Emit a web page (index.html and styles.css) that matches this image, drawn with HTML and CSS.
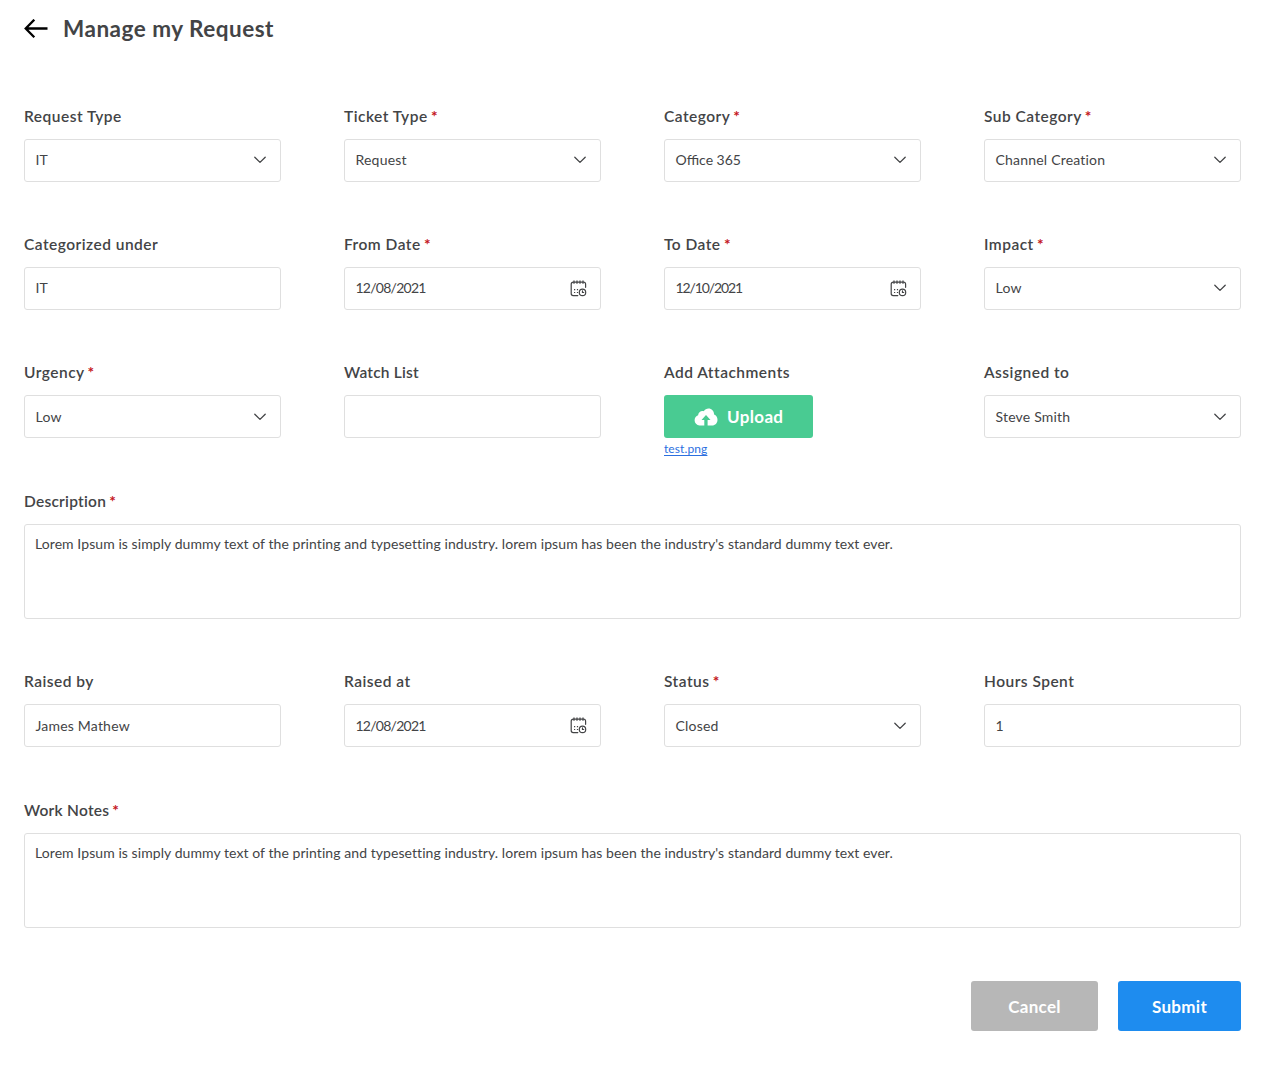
FILE: index.html
```
<!DOCTYPE html>
<html lang="en">
<head>
<meta charset="utf-8">
<title>Manage my Request</title>
<link rel="stylesheet" href="styles.css">
</head>
<body>
<svg class="defs" aria-hidden="true">
  <symbol id="chevron" viewBox="0 0 14 8"><path d="M1.800 1.300 7 6.400l5.200-5.100" fill="none" stroke="currentColor" stroke-width="1.300" stroke-linecap="round" stroke-linejoin="round"/></symbol>
  <symbol id="calendar" viewBox="0 0 17 17">
    <g fill="none" stroke="currentColor" stroke-width="1.200" stroke-linecap="round">
      <path d="M15.600 7.300V4.200a2 2 0 0 0-2-2H3.200a2 2 0 0 0-2 2v9.400a2 2 0 0 0 2 2H7.800"/>
      <path d="M4 .9v2.400M7 .9v2.400M10 .9v2.400M13 .9v2.400"/>
      <circle cx="12.500" cy="12.400" r="3.200"/>
      <path d="M12.500 10.900v1.600h1.200"/>
    </g>
    <path d="M4 9h1.200v1.200H4zM6.900 9h1.200v1.200H6.900zM4 11.900h1.200v1.200H4zM6.900 11.900h1.200v1.200H6.900z" fill="currentColor"/>
  </symbol>
</svg>
<main class="page">
  <header class="header">
    <svg class="back" viewBox="0 0 24 20"><path d="M10.300.7 1.700 9.500l8.600 8.800M1.700 9.500H23.500" fill="none" stroke="#000" stroke-width="2.300"/></svg>
    <h1 class="title">Manage my Request</h1>
  </header>
  <form class="form">
    <div class="field"><div class="label">Request Type</div><div class="box"><span>IT</span><svg class="chevron"><use href="#chevron"/></svg></div></div>
    <div class="field"><div class="label">Ticket Type <b class="req">*</b></div><div class="box"><span>Request</span><svg class="chevron"><use href="#chevron"/></svg></div></div>
    <div class="field"><div class="label">Category <b class="req">*</b></div><div class="box"><span class="snug">Office 365</span><svg class="chevron"><use href="#chevron"/></svg></div></div>
    <div class="field"><div class="label">Sub Category <b class="req">*</b></div><div class="box"><span>Channel Creation</span><svg class="chevron"><use href="#chevron"/></svg></div></div>

    <div class="field"><div class="label">Categorized under</div><div class="box"><span>IT</span></div></div>
    <div class="field"><div class="label">From Date <b class="req">*</b></div><div class="box"><span class="date">12/08/2021</span><svg class="calendar"><use href="#calendar"/></svg></div></div>
    <div class="field"><div class="label">To Date <b class="req">*</b></div><div class="box"><span class="date narrow">12/10/2021</span><svg class="calendar"><use href="#calendar"/></svg></div></div>
    <div class="field"><div class="label">Impact <b class="req">*</b></div><div class="box"><span>Low</span><svg class="chevron"><use href="#chevron"/></svg></div></div>

    <div class="field"><div class="label">Urgency <b class="req">*</b></div><div class="box"><span>Low</span><svg class="chevron"><use href="#chevron"/></svg></div></div>
    <div class="field"><div class="label snug">Watch List</div><div class="box"></div></div>
    <div class="field upload-field"><div class="label">Add Attachments</div>
      <button class="upload" type="button"><svg class="cloud" viewBox="0 0 24 18"><path fill="#fff" fill-rule="evenodd" d="M10.300 17.500H5.500A5.200 5.200 0 0 1 .6 12.300c0-2.500 1.600-4.400 3.500-5C4.300 4.700 6.200 3 8.500 3c.5 0 .9.1 1.300.2C10.900 1.500 12.600.6 14.500.6c3.200 0 5.500 2.500 5.600 5.900 2.100.7 3.400 2.700 3.400 5.200 0 3.300-2.300 5.800-5.500 5.800h-4.400v-5.400h2.900L12 7.100l-4.500 5h2.800z"/></svg><span>Upload</span></button>
      <a class="file">test.png</a>
    </div>
    <div class="field"><div class="label">Assigned to</div><div class="box"><span>Steve Smith</span><svg class="chevron"><use href="#chevron"/></svg></div></div>

    <div class="field wide"><div class="label">Description <b class="req">*</b></div><div class="box area"><span class="long">Lorem Ipsum is simply dummy text of the printing and typesetting industry. lorem ipsum has been the industry's standard dummy text ever.</span></div></div>

    <div class="field"><div class="label">Raised by</div><div class="box"><span>James Mathew</span></div></div>
    <div class="field"><div class="label">Raised at</div><div class="box"><span class="date">12/08/2021</span><svg class="calendar"><use href="#calendar"/></svg></div></div>
    <div class="field"><div class="label">Status <b class="req">*</b></div><div class="box"><span>Closed</span><svg class="chevron"><use href="#chevron"/></svg></div></div>
    <div class="field"><div class="label">Hours Spent</div><div class="box"><span>1</span></div></div>

    <div class="field wide"><div class="label">Work Notes <b class="req">*</b></div><div class="box area"><span class="long">Lorem Ipsum is simply dummy text of the printing and typesetting industry. lorem ipsum has been the industry's standard dummy text ever.</span></div></div>
  </form>
  <footer class="actions">
    <button class="btn cancel" type="button">Cancel</button>
    <button class="btn submit" type="button">Submit</button>
  </footer>
</main>
</body>
</html>
```
FILE: styles.css
```
* { box-sizing: border-box; }
body { margin: 0; background: #fff; color: #434446; font-family: Lato, "Open Sans", sans-serif; }
.defs { display: none; }
.page { width: 1241px; padding: 0 0 0 24px; }
.header { display: flex; align-items: center; gap: 15px; height: 57px; }
.back { width: 24px; height: 20px; }
.title { margin: 0; font-size: 22.500px; line-height: 30px; font-weight: 700; letter-spacing: .5px; white-space: nowrap; }
.form { display: grid; grid-template-columns: repeat(4, 257px); column-gap: 63px; row-gap: 54.450px; margin-top: 50.550px; }
.field { display: flex; flex-direction: column; gap: 11px; }
.wide { grid-column: 1 / -1; }
.label { flex: none; height: 20px; font-size: 15.500px; line-height: 17.500px; font-weight: 600; letter-spacing: .48px; white-space: nowrap; }
.wide .label { letter-spacing: .25px; }
.label.snug { letter-spacing: .2px; }
.req { margin-left: -1px; color: #c4161c; font-weight: 700; }
.box { display: flex; align-items: center; justify-content: space-between; height: 43px; padding: 0 13px 0 10.500px; border: 1px solid #dfdfdf; border-radius: 3px; font-size: 14px; line-height: 20px; letter-spacing: .2px; white-space: nowrap; }
.box .snug { letter-spacing: 0; }
.box .date { letter-spacing: -.750px; }
.box .narrow { letter-spacing: -1.100px; }
.box .long { letter-spacing: .07px; }
.area { height: 95px; align-items: flex-start; padding: 9px 10px 0; }
.chevron { width: 14px; height: 8px; }
.calendar { width: 17px; height: 17px; }
.upload-field { height: 74px; }
.upload { display: flex; flex: none; align-items: center; gap: 9px; width: 149px; height: 43px; padding: 1px 0 0 30px; border: 0; border-radius: 3px; background: #49cb92; color: #fff; font: 700 17px/22px Lato, sans-serif; letter-spacing: .35px; }
.cloud { width: 24px; height: 18px; }
.file { margin-top: -8px; font-size: 12px; line-height: 16px; letter-spacing: .1px; color: #2b6fdf; text-decoration: underline; text-underline-offset: 2px; }
.actions { display: flex; justify-content: flex-end; gap: 20px; margin-top: 53.200px; }
.btn { height: 50.500px; padding: 2px 0 0; border: 0; border-radius: 3px; color: #fff; font: 700 17px/22px Lato, sans-serif; letter-spacing: .3px; }
.cancel { width: 127px; background: #b7b7b7; }
.submit { width: 123px; background: #1e8cef; }
```
